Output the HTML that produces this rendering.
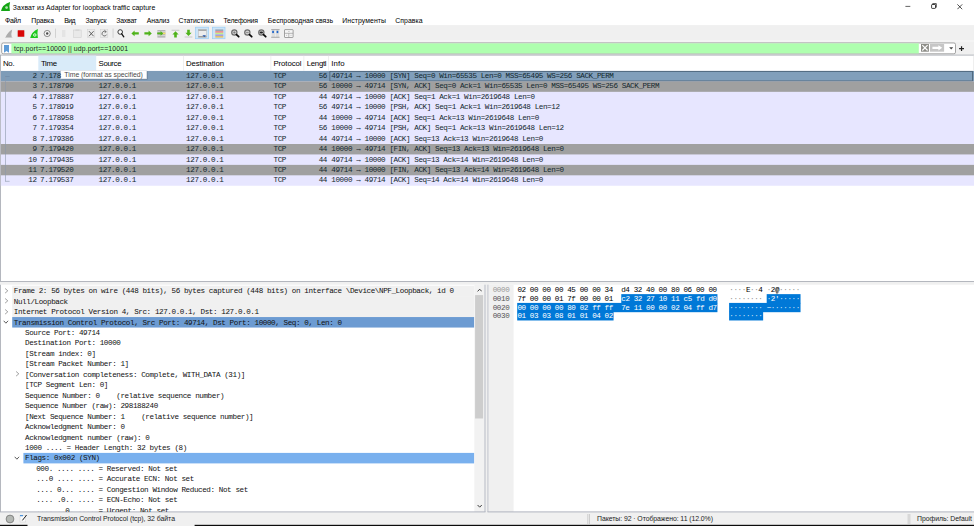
<!DOCTYPE html>
<html><head><meta charset="utf-8"><title>Wireshark</title>
<style>
html,body{margin:0;padding:0;}
body{width:974px;height:526px;overflow:hidden;position:relative;background:#f0f0f0;font-family:"Liberation Sans",sans-serif;}
.b{position:absolute;display:block;}
.t{position:absolute;white-space:pre;color:#000;}
.s{font-family:"Liberation Sans",sans-serif;font-size:6.9px;line-height:10px;}
.h{font-family:"Liberation Sans",sans-serif;font-size:7.8px;line-height:12px;}
.m{font-family:"Liberation Mono",monospace;font-size:7.6px;letter-spacing:-0.407px;line-height:10.45px;color:#12272e;}
.x{font-family:"Liberation Mono",monospace;font-size:7.6px;letter-spacing:-0.405px;line-height:8.75px;color:#000;}
</style></head><body>

<svg class="b" style="left:0;top:0" width="974" height="526" viewBox="0 0 974 526"><rect x="0.00" y="0.00" width="974.00" height="25.30" fill="#ffffff"/><rect x="0.00" y="25.20" width="974.00" height="16.40" fill="#f0f0f0"/><rect x="0.00" y="40.60" width="974.00" height="0.80" fill="#fafafa"/><rect x="16.60" y="29.30" width="8.40" height="8.50" fill="#e4f0f0"/><rect x="17.70" y="30.20" width="6.60" height="6.60" fill="#d80404" rx="0.4"/><rect x="55.10" y="28.60" width="0.70" height="9.20" fill="#c4c4c4"/><rect x="112.70" y="28.60" width="0.70" height="9.20" fill="#c4c4c4"/><rect x="195.50" y="27.20" width="13.00" height="11.50" fill="#cce4f7" stroke="#99cdf5" stroke-width="0.7"/><rect x="212.40" y="27.20" width="12.60" height="11.50" fill="#cce4f7" stroke="#99cdf5" stroke-width="0.7"/><rect x="1.70" y="42.95" width="953.80" height="10.85" fill="#ffffff" rx="1.6" stroke="#8e8e8e" stroke-width="0.8"/><rect x="11.40" y="43.35" width="907.40" height="10.05" fill="#afffaf"/><rect x="0.42" y="55.10" width="980.00" height="226.40" fill="#ffffff" stroke="#a8acb4" stroke-width="0.85"/><rect x="38.30" y="55.60" width="57.90" height="15.00" fill="#d9ebf9"/><rect x="183.30" y="55.60" width="0.60" height="15.00" fill="#e5e5e5"/><rect x="270.60" y="55.60" width="0.60" height="15.00" fill="#e5e5e5"/><rect x="303.60" y="55.60" width="0.60" height="15.00" fill="#e5e5e5"/><rect x="328.20" y="55.60" width="0.60" height="15.00" fill="#e5e5e5"/><rect x="973.00" y="55.60" width="0.60" height="15.00" fill="#e5e5e5"/><rect x="0.85" y="70.95" width="974.00" height="114.79" fill="#e7e6ff"/><rect x="0.85" y="70.95" width="974.00" height="10.44" fill="#7e9cb8"/><rect x="329.90" y="71.30" width="642.60" height="9.70" fill="#819fbb" stroke="#3e5468" stroke-width="0.7"/><rect x="0.85" y="81.39" width="974.00" height="10.44" fill="#a0a0a0"/><rect x="0.85" y="144.00" width="974.00" height="10.44" fill="#a0a0a0"/><rect x="0.85" y="164.87" width="974.00" height="10.44" fill="#a0a0a0"/><rect x="5.20" y="76.20" width="0.60" height="105.20" fill="#8c98aa"/><rect x="5.20" y="76.20" width="4.40" height="0.55" fill="#6a86a2"/><rect x="5.20" y="180.90" width="4.40" height="0.60" fill="#8c98aa"/><rect x="61.40" y="71.40" width="86.20" height="8.20" fill="rgba(0,0,0,.20)"/><rect x="60.70" y="70.70" width="86.10" height="8.20" fill="#ffffff" stroke="#c8ccd2" stroke-width="0.3"/><rect x="0.00" y="284.70" width="485.50" height="227.30" fill="#ffffff"/><rect x="0.00" y="284.70" width="0.85" height="227.30" fill="#a8acb4"/><rect x="12.20" y="285.70" width="462.10" height="10.95" fill="#f0f0f0"/><rect x="12.20" y="296.15" width="462.10" height="10.95" fill="#f0f0f0"/><rect x="12.20" y="306.60" width="462.10" height="10.45" fill="#f0f0f0"/><rect x="12.20" y="317.05" width="462.10" height="10.50" fill="#6c9bd2"/><rect x="23.40" y="452.90" width="450.90" height="10.50" fill="#79b0ee"/><rect x="474.30" y="284.70" width="10.20" height="227.30" fill="#f2f2f2"/><rect x="475.10" y="295.10" width="8.00" height="123.40" fill="#cdcdcd"/><rect x="484.50" y="284.70" width="1.00" height="227.30" fill="#b0b4be"/><rect x="487.50" y="284.70" width="486.50" height="227.30" fill="#ffffff"/><rect x="487.50" y="284.70" width="1.10" height="227.30" fill="#b0b4be"/><rect x="488.60" y="284.70" width="25.00" height="227.30" fill="#f0f0f0"/><rect x="621.27" y="294.13" width="96.17" height="9.28" fill="#0078d7"/><rect x="517.20" y="302.91" width="200.24" height="9.28" fill="#0078d7"/><rect x="517.20" y="311.69" width="96.37" height="8.78" fill="#0078d7"/><rect x="766.70" y="294.13" width="33.84" height="9.28" fill="#0078d7"/><rect x="729.10" y="302.91" width="71.44" height="9.28" fill="#0078d7"/><rect x="729.10" y="311.69" width="34.04" height="8.78" fill="#0078d7"/><rect x="0.00" y="512.00" width="974.00" height="14.00" fill="#f0f0f0"/><rect x="0.00" y="511.40" width="485.50" height="1.00" fill="#b0b4be"/><rect x="487.50" y="511.40" width="486.50" height="1.00" fill="#b0b4be"/><rect x="587.60" y="514.00" width="0.60" height="10.00" fill="#b4b4b4"/><rect x="589.40" y="514.00" width="0.60" height="10.00" fill="#b4b4b4"/><rect x="907.80" y="514.00" width="0.60" height="10.00" fill="#b4b4b4"/><rect x="909.60" y="514.00" width="0.60" height="10.00" fill="#b4b4b4"/><rect x="0.00" y="524.80" width="27.50" height="1.30" fill="#0c0c0c"/><rect x="194.60" y="524.80" width="779.40" height="1.30" fill="#0c0c0c"/></svg>
<svg class="b" style="left:1.00px;top:2.00px" width="10" height="10" viewBox="0 0 10 10"><path d="M0 9 Q1.2 2.6 9.1 0 Q7.7 4.4 8.9 9 Z" fill="#14a514"/><circle cx="5.6" cy="5.6" r="1.4" fill="#b4e0b4"/></svg>
<span id="t1" class="t s" style="top:2.50px;left:12.80px;letter-spacing:0.059px;">Захват из Adapter for loopback traffic capture</span>
<svg class="b" style="left:905.00px;top:4.00px" width="6" height="6" viewBox="0 0 6 6"><path d="M0.4 2.4H5.3" stroke="#222" stroke-width="0.7"/></svg>
<svg class="b" style="left:931.00px;top:3.40px" width="6" height="6" viewBox="0 0 6 6"><rect x="0.6" y="1.5" width="3.9" height="3.9" fill="none" stroke="#111" stroke-width="0.8" rx="0.6"/><path d="M1.7 1.4V0.6H5.3V4.3H4.6" fill="none" stroke="#111" stroke-width="0.7"/></svg>
<svg class="b" style="left:956.90px;top:3.80px" width="6" height="6" viewBox="0 0 6 6"><path d="M0.4 0.4L5.2 5.2M5.2 0.4L0.4 5.2" stroke="#222" stroke-width="0.8"/></svg>
<span id="t2" class="t s" style="top:15.80px;left:5.00px;letter-spacing:-0.318px;">Файл</span>
<span id="t3" class="t s" style="top:15.80px;left:31.30px;letter-spacing:-0.116px;">Правка</span>
<span id="t4" class="t s" style="top:15.80px;left:64.30px;letter-spacing:-0.634px;">Вид</span>
<span id="t5" class="t s" style="top:15.80px;left:85.50px;letter-spacing:-0.113px;">Запуск</span>
<span id="t6" class="t s" style="top:15.80px;left:116.30px;letter-spacing:-0.232px;">Захват</span>
<span id="t7" class="t s" style="top:15.80px;left:146.80px;letter-spacing:-0.113px;">Анализ</span>
<span id="t8" class="t s" style="top:15.80px;left:178.50px;letter-spacing:-0.078px;">Статистика</span>
<span id="t9" class="t s" style="top:15.80px;left:223.40px;letter-spacing:-0.196px;">Телефония</span>
<span id="t10" class="t s" style="top:15.80px;left:267.80px;letter-spacing:-0.005px;">Беспроводная связь</span>
<span id="t11" class="t s" style="top:15.80px;left:342.30px;letter-spacing:0.073px;">Инструменты</span>
<span id="t12" class="t s" style="top:15.80px;left:395.30px;letter-spacing:0.028px;">Справка</span>
<svg class="b" style="left:4.60px;top:29.00px" width="9" height="9" viewBox="0 0 9 9"><path d="M0.4 8.5 Q2.4 3.4 7.2 0.5 Q5.8 4.6 6.8 8.5 Z" fill="#acacac"/><path d="M0 8.5H7.6" stroke="#c8c8c8" stroke-width="0.5"/></svg>
<svg class="b" style="left:29.80px;top:29.00px" width="9" height="9" viewBox="0 0 9 9"><path d="M0.2 8.9 Q1.6 2.8 7.9 0 Q6.9 4.4 7.9 8.9 Z" fill="#1cc81c"/><circle cx="4.8" cy="6" r="1.25" fill="none" stroke="#f0fff0" stroke-width="0.9"/></svg>
<svg class="b" style="left:43.40px;top:29.00px" width="9" height="9" viewBox="0 0 9 9"><circle cx="4.2" cy="4.5" r="3.1" fill="#f4f4f4" stroke="#4a4a4a" stroke-width="0.6"/><circle cx="4.2" cy="4.5" r="1.2" fill="#4a4a4a"/></svg>
<svg class="b" style="left:61.40px;top:29.00px" width="9" height="9" viewBox="0 0 9 9"><rect x="1" y="1" width="3.4" height="7" fill="#e4e4e4"/></svg>
<svg class="b" style="left:73.00px;top:29.00px" width="9" height="9" viewBox="0 0 9 9"><rect x="0.6" y="1" width="7.6" height="7.4" fill="#e9e9e9" stroke="#cfcfcf" stroke-width="0.6"/><rect x="2.4" y="0.4" width="4" height="1.6" fill="#d6d6d6"/></svg>
<svg class="b" style="left:87.00px;top:29.00px" width="9" height="9" viewBox="0 0 9 9"><rect x="0.6" y="0.6" width="7.2" height="8" fill="#ececec" stroke="#cfcfcf" stroke-width="0.5"/><path d="M2 2.2L6.6 7.2M6.6 2.2L2 7.2" stroke="#555" stroke-width="0.9"/></svg>
<svg class="b" style="left:100.40px;top:29.00px" width="9" height="9" viewBox="0 0 9 9"><rect x="0.6" y="0.6" width="7.2" height="8" fill="#ececec" stroke="#cfcfcf" stroke-width="0.5"/><path d="M6 2.8A2.4 2.4 0 1 0 6.6 5.6" fill="none" stroke="#666" stroke-width="0.9"/><path d="M4.4 1.2L6.4 2.7L4.6 3.8" fill="none" stroke="#666" stroke-width="0.7"/></svg>
<svg class="b" style="left:117.40px;top:29.00px" width="9" height="9" viewBox="0 0 9 9"><circle cx="3.2" cy="3" r="2.3" fill="#fbfbfb" stroke="#222" stroke-width="0.9"/><path d="M4.7 4.8L6.8 7.8" stroke="#111" stroke-width="1.3" stroke-linecap="round"/></svg>
<svg class="b" style="left:131.40px;top:29.00px" width="9" height="9" viewBox="0 0 9 9"><path d="M0.4 4.4L3.6 1.6V3.2H7.8V5.6H3.6V7.2Z" fill="#4fb31a"/></svg>
<svg class="b" style="left:144.20px;top:29.00px" width="9" height="9" viewBox="0 0 9 9"><path d="M7.8 4.4L4.6 1.6V3.2H0.4V5.6H4.6V7.2Z" fill="#4fb31a"/></svg>
<svg class="b" style="left:157.20px;top:29.00px" width="9" height="9" viewBox="0 0 9 9"><rect x="0.4" y="1" width="8" height="7.6" fill="#b4b4b4"/><rect x="0.4" y="2.4" width="8" height="0.7" fill="#e8e8e8"/><rect x="0.4" y="6.4" width="8" height="0.7" fill="#e8e8e8"/><rect x="5.6" y="3.6" width="2.8" height="1.6" fill="#f4e36a"/><path d="M6.2 4.4L3.6 2V3.5H0.2V5.3H3.6V6.8Z" fill="#4fb31a"/></svg>
<svg class="b" style="left:170.60px;top:29.00px" width="9" height="9" viewBox="0 0 9 9"><rect x="0.6" y="0.8" width="7.8" height="0.8" fill="#bdbdbd"/><path d="M4.5 2.2L1.4 5.4H3.2V8.4H5.8V5.4H7.6Z" fill="#4fb31a"/></svg>
<svg class="b" style="left:183.80px;top:29.00px" width="9" height="9" viewBox="0 0 9 9"><rect x="0.6" y="7.6" width="7.8" height="0.8" fill="#bdbdbd"/><path d="M4.5 7L1.4 3.8H3.2V0.8H5.8V3.8H7.6Z" fill="#4fb31a"/></svg>
<svg class="b" style="left:197.80px;top:29.00px" width="9" height="9" viewBox="0 0 9 9"><rect x="0.4" y="0.6" width="8" height="7.8" fill="#ededed" stroke="#b5b5b5" stroke-width="0.5"/><rect x="0.4" y="0.6" width="8" height="1.2" fill="#9a9a9a"/><rect x="0.4" y="7.2" width="8" height="1" fill="#8a8a8a"/><path d="M4.4 6.2H8L6.2 8Z" fill="#1a4fae"/></svg>
<svg class="b" style="left:214.60px;top:29.00px" width="9" height="9" viewBox="0 0 9 9"><rect x="0.3" y="0.4" width="8" height="1.7" fill="#9aa7b4"/><rect x="0.3" y="2.1" width="8" height="1.7" fill="#f08a8a"/><rect x="0.3" y="3.8" width="8" height="1.6" fill="#c4ee86"/><rect x="0.3" y="5.4" width="8" height="1.6" fill="#a6a0dc"/><rect x="0.3" y="7" width="8" height="1.6" fill="#e2c06a"/></svg>
<svg class="b" style="left:231.20px;top:29.00px" width="9" height="9" viewBox="0 0 9 9"><circle cx="3.35" cy="3.5" r="3.6" fill="#f8f8f8"/><circle cx="3.35" cy="3.5" r="2.65" fill="#cdcdcd" stroke="#6c6c6c" stroke-width="1.15"/><path d="M2.2 3.5H4.5M3.35 2.35V4.65" stroke="#666" stroke-width="0.6"/><path d="M5.5 5.7L7.7 7.7" stroke="#0a0a0a" stroke-width="1.8" stroke-linecap="round"/></svg>
<svg class="b" style="left:244.25px;top:29.00px" width="9" height="9" viewBox="0 0 9 9"><circle cx="3.35" cy="3.5" r="3.6" fill="#f8f8f8"/><circle cx="3.35" cy="3.5" r="2.65" fill="#cdcdcd" stroke="#6c6c6c" stroke-width="1.15"/><path d="M2.1 3.5H4.6" stroke="#777" stroke-width="0.7"/><path d="M5.5 5.7L7.7 7.7" stroke="#0a0a0a" stroke-width="1.8" stroke-linecap="round"/></svg>
<svg class="b" style="left:258.05px;top:29.00px" width="9" height="9" viewBox="0 0 9 9"><circle cx="3.35" cy="3.5" r="3.6" fill="#f8f8f8"/><circle cx="3.35" cy="3.5" r="2.65" fill="#cdcdcd" stroke="#6c6c6c" stroke-width="1.15"/><ellipse cx="3.35" cy="3.5" rx="1.7" ry="0.9" fill="#222"/><path d="M5.5 5.7L7.7 7.7" stroke="#0a0a0a" stroke-width="1.8" stroke-linecap="round"/></svg>
<svg class="b" style="left:271.40px;top:29.00px" width="9" height="9" viewBox="0 0 9 9"><rect x="0.6" y="0.8" width="7.6" height="7.4" fill="#dedede"/><path d="M4.4 0.8V8.2" stroke="#f4f4f4" stroke-width="0.7"/><path d="M0.2 0.6H8.6M0.2 8.3H8.6" stroke="#8a8a8a" stroke-width="0.7"/><rect x="1.2" y="1.8" width="1.7" height="2.3" fill="#1e64c8"/><rect x="5.6" y="1.8" width="1.7" height="2.3" fill="#1e64c8"/></svg>
<svg class="b" style="left:284.20px;top:29.00px" width="10" height="9" viewBox="0 0 10 9"><rect x="0.5" y="0.6" width="8.6" height="7.9" fill="#f6f6f6" stroke="#8c8c8c" stroke-width="0.8" rx="0.5"/><path d="M0.5 4.3H9.1M4.8 4.3V8.5" stroke="#9a9a9a" stroke-width="0.7"/><path d="M4.2 2.5H5.6M2.6 5.8V7M7 5.8V7" stroke="#aaa" stroke-width="0.6"/></svg>
<svg class="b" style="left:4.00px;top:44.50px" width="5" height="8" viewBox="0 0 5 8"><path d="M0 0H5V7.8L2.5 6L0 7.8Z" fill="#5e9bd6"/></svg>
<span id="t13" class="t s" style="top:43.50px;left:14.00px;color:#1a1a1a;letter-spacing:0.118px;">tcp.port==10000 || udp.port==10001</span>
<svg class="b" style="left:920.80px;top:44.30px" width="8" height="8" viewBox="0 0 8 8"><rect x="0" y="0" width="7.9" height="7.7" fill="#8c8c86"/><path d="M1.3 1.2L6.6 6.5M6.6 1.2L1.3 6.5" stroke="#fff" stroke-width="1.2"/></svg>
<svg class="b" style="left:930.20px;top:44.30px" width="15" height="8" viewBox="0 0 15 8"><rect x="0" y="0" width="14.1" height="7.7" fill="#c6c6c6"/><path d="M2.4 2.8H8.4V1.3L12.2 3.85L8.4 6.4V4.9H2.4Z" fill="#fff"/></svg>
<svg class="b" style="left:948.60px;top:46.80px" width="5" height="3" viewBox="0 0 5 3"><path d="M0.2 0.3H4.2L2.2 2.5Z" fill="#444"/></svg>
<svg class="b" style="left:959.00px;top:45.70px" width="6" height="6" viewBox="0 0 6 6"><path d="M2.55 0.2V4.9M0.1 2.55H5" stroke="#222" stroke-width="1.2"/></svg>
<span id="t14" class="t h" style="top:58.00px;left:2.90px;letter-spacing:-0.170px;">No.</span>
<span id="t15" class="t h" style="top:58.00px;left:41.00px;letter-spacing:-0.349px;">Time</span>
<span id="t16" class="t h" style="top:58.00px;left:98.60px;letter-spacing:-0.364px;">Source</span>
<span id="t17" class="t h" style="top:58.00px;left:186.10px;letter-spacing:-0.112px;">Destination</span>
<span id="t18" class="t h" style="top:58.00px;left:273.50px;letter-spacing:-0.087px;">Protocol</span>
<span id="t19" class="t h" style="top:58.00px;left:306.70px;letter-spacing:-0.270px;">Lengtl</span>
<span id="t20" class="t h" style="top:58.00px;left:331.30px;letter-spacing:0.061px;">Info</span>
<span id="t21" class="t m" style="top:70.95px;right:937.40px;">2</span>
<span id="t22" class="t m" style="top:70.95px;left:40.10px;">7.178</span>
<span id="t23" class="t m" style="top:70.95px;left:186.10px;">127.0.0.1</span>
<span id="t24" class="t m" style="top:70.95px;left:273.50px;">TCP</span>
<span id="t25" class="t m" style="top:70.95px;right:647.00px;">56</span>
<span id="t26" class="t m" style="top:70.95px;left:331.30px;">49714 → 10000 [SYN] Seq=0 Win=65535 Len=0 MSS=65495 WS=256 SACK_PERM</span>
<span id="t27" class="t m" style="top:81.40px;right:937.40px;">3</span>
<span id="t28" class="t m" style="top:81.40px;left:40.10px;">7.178790</span>
<span id="t29" class="t m" style="top:81.40px;left:98.60px;">127.0.0.1</span>
<span id="t30" class="t m" style="top:81.40px;left:186.10px;">127.0.0.1</span>
<span id="t31" class="t m" style="top:81.40px;left:273.50px;">TCP</span>
<span id="t32" class="t m" style="top:81.40px;right:647.00px;">56</span>
<span id="t33" class="t m" style="top:81.40px;left:331.30px;">10000 → 49714 [SYN, ACK] Seq=0 Ack=1 Win=65535 Len=0 MSS=65495 WS=256 SACK_PERM</span>
<span id="t34" class="t m" style="top:91.85px;right:937.40px;">4</span>
<span id="t35" class="t m" style="top:91.85px;left:40.10px;">7.178887</span>
<span id="t36" class="t m" style="top:91.85px;left:98.60px;">127.0.0.1</span>
<span id="t37" class="t m" style="top:91.85px;left:186.10px;">127.0.0.1</span>
<span id="t38" class="t m" style="top:91.85px;left:273.50px;">TCP</span>
<span id="t39" class="t m" style="top:91.85px;right:647.00px;">44</span>
<span id="t40" class="t m" style="top:91.85px;left:331.30px;">49714 → 10000 [ACK] Seq=1 Ack=1 Win=2619648 Len=0</span>
<span id="t41" class="t m" style="top:102.30px;right:937.40px;">5</span>
<span id="t42" class="t m" style="top:102.30px;left:40.10px;">7.178919</span>
<span id="t43" class="t m" style="top:102.30px;left:98.60px;">127.0.0.1</span>
<span id="t44" class="t m" style="top:102.30px;left:186.10px;">127.0.0.1</span>
<span id="t45" class="t m" style="top:102.30px;left:273.50px;">TCP</span>
<span id="t46" class="t m" style="top:102.30px;right:647.00px;">56</span>
<span id="t47" class="t m" style="top:102.30px;left:331.30px;">49714 → 10000 [PSH, ACK] Seq=1 Ack=1 Win=2619648 Len=12</span>
<span id="t48" class="t m" style="top:112.75px;right:937.40px;">6</span>
<span id="t49" class="t m" style="top:112.75px;left:40.10px;">7.178958</span>
<span id="t50" class="t m" style="top:112.75px;left:98.60px;">127.0.0.1</span>
<span id="t51" class="t m" style="top:112.75px;left:186.10px;">127.0.0.1</span>
<span id="t52" class="t m" style="top:112.75px;left:273.50px;">TCP</span>
<span id="t53" class="t m" style="top:112.75px;right:647.00px;">44</span>
<span id="t54" class="t m" style="top:112.75px;left:331.30px;">10000 → 49714 [ACK] Seq=1 Ack=13 Win=2619648 Len=0</span>
<span id="t55" class="t m" style="top:123.20px;right:937.40px;">7</span>
<span id="t56" class="t m" style="top:123.20px;left:40.10px;">7.179354</span>
<span id="t57" class="t m" style="top:123.20px;left:98.60px;">127.0.0.1</span>
<span id="t58" class="t m" style="top:123.20px;left:186.10px;">127.0.0.1</span>
<span id="t59" class="t m" style="top:123.20px;left:273.50px;">TCP</span>
<span id="t60" class="t m" style="top:123.20px;right:647.00px;">56</span>
<span id="t61" class="t m" style="top:123.20px;left:331.30px;">10000 → 49714 [PSH, ACK] Seq=1 Ack=13 Win=2619648 Len=12</span>
<span id="t62" class="t m" style="top:133.65px;right:937.40px;">8</span>
<span id="t63" class="t m" style="top:133.65px;left:40.10px;">7.179386</span>
<span id="t64" class="t m" style="top:133.65px;left:98.60px;">127.0.0.1</span>
<span id="t65" class="t m" style="top:133.65px;left:186.10px;">127.0.0.1</span>
<span id="t66" class="t m" style="top:133.65px;left:273.50px;">TCP</span>
<span id="t67" class="t m" style="top:133.65px;right:647.00px;">44</span>
<span id="t68" class="t m" style="top:133.65px;left:331.30px;">49714 → 10000 [ACK] Seq=13 Ack=13 Win=2619648 Len=0</span>
<span id="t69" class="t m" style="top:144.10px;right:937.40px;">9</span>
<span id="t70" class="t m" style="top:144.10px;left:40.10px;">7.179420</span>
<span id="t71" class="t m" style="top:144.10px;left:98.60px;">127.0.0.1</span>
<span id="t72" class="t m" style="top:144.10px;left:186.10px;">127.0.0.1</span>
<span id="t73" class="t m" style="top:144.10px;left:273.50px;">TCP</span>
<span id="t74" class="t m" style="top:144.10px;right:647.00px;">44</span>
<span id="t75" class="t m" style="top:144.10px;left:331.30px;">10000 → 49714 [FIN, ACK] Seq=13 Ack=13 Win=2619648 Len=0</span>
<span id="t76" class="t m" style="top:154.55px;right:937.40px;">10</span>
<span id="t77" class="t m" style="top:154.55px;left:40.10px;">7.179435</span>
<span id="t78" class="t m" style="top:154.55px;left:98.60px;">127.0.0.1</span>
<span id="t79" class="t m" style="top:154.55px;left:186.10px;">127.0.0.1</span>
<span id="t80" class="t m" style="top:154.55px;left:273.50px;">TCP</span>
<span id="t81" class="t m" style="top:154.55px;right:647.00px;">44</span>
<span id="t82" class="t m" style="top:154.55px;left:331.30px;">49714 → 10000 [ACK] Seq=13 Ack=14 Win=2619648 Len=0</span>
<span id="t83" class="t m" style="top:165.00px;right:937.40px;">11</span>
<span id="t84" class="t m" style="top:165.00px;left:40.10px;">7.179520</span>
<span id="t85" class="t m" style="top:165.00px;left:98.60px;">127.0.0.1</span>
<span id="t86" class="t m" style="top:165.00px;left:186.10px;">127.0.0.1</span>
<span id="t87" class="t m" style="top:165.00px;left:273.50px;">TCP</span>
<span id="t88" class="t m" style="top:165.00px;right:647.00px;">44</span>
<span id="t89" class="t m" style="top:165.00px;left:331.30px;">49714 → 10000 [FIN, ACK] Seq=13 Ack=14 Win=2619648 Len=0</span>
<span id="t90" class="t m" style="top:175.45px;right:937.40px;">12</span>
<span id="t91" class="t m" style="top:175.45px;left:40.10px;">7.179537</span>
<span id="t92" class="t m" style="top:175.45px;left:98.60px;">127.0.0.1</span>
<span id="t93" class="t m" style="top:175.45px;left:186.10px;">127.0.0.1</span>
<span id="t94" class="t m" style="top:175.45px;left:273.50px;">TCP</span>
<span id="t95" class="t m" style="top:175.45px;right:647.00px;">44</span>
<span id="t96" class="t m" style="top:175.45px;left:331.30px;">10000 → 49714 [ACK] Seq=14 Ack=14 Win=2619648 Len=0</span>
<span id="t97" class="t s" style="top:69.80px;left:64.30px;color:#4a4a4a;letter-spacing:-0.036px;">Time (format as specified)</span>
<div class="b" style="left:0;top:284.70px;width:484.6px;height:227.30px;overflow:hidden;">
<span id="t98" class="t m" style="top:1.55px;left:13.80px;color:#111;">Frame 2: 56 bytes on wire (448 bits), 56 bytes captured (448 bits) on interface \Device\NPF_Loopback, id 0</span>
<svg class="b" style="left:3.60px;top:3.20px" width="5" height="6" viewBox="0 0 5 6"><path d="M1.1 0.5L3.8 2.8L1.1 5.1" fill="none" stroke="#8e8e8e" stroke-width="0.85"/></svg>
<span id="t99" class="t m" style="top:12.00px;left:13.80px;color:#111;">Null/Loopback</span>
<svg class="b" style="left:3.60px;top:13.65px" width="5" height="6" viewBox="0 0 5 6"><path d="M1.1 0.5L3.8 2.8L1.1 5.1" fill="none" stroke="#8e8e8e" stroke-width="0.85"/></svg>
<span id="t100" class="t m" style="top:22.45px;left:13.80px;color:#111;">Internet Protocol Version 4, Src: 127.0.0.1, Dst: 127.0.0.1</span>
<svg class="b" style="left:3.60px;top:24.10px" width="5" height="6" viewBox="0 0 5 6"><path d="M1.1 0.5L3.8 2.8L1.1 5.1" fill="none" stroke="#8e8e8e" stroke-width="0.85"/></svg>
<span id="t101" class="t m" style="top:32.90px;left:13.80px;color:#111;">Transmission Control Protocol, Src Port: 49714, Dst Port: 10000, Seq: 0, Len: 0</span>
<svg class="b" style="left:3.00px;top:35.35px" width="6" height="5" viewBox="0 0 6 5"><path d="M0.7 0.8L2.9 3.2L5.1 0.8" fill="none" stroke="#333" stroke-width="0.8"/></svg>
<span id="t102" class="t m" style="top:43.35px;left:25.00px;color:#111;">Source Port: 49714</span>
<span id="t103" class="t m" style="top:53.80px;left:25.00px;color:#111;">Destination Port: 10000</span>
<span id="t104" class="t m" style="top:64.25px;left:25.00px;color:#111;">[Stream index: 0]</span>
<span id="t105" class="t m" style="top:74.70px;left:25.00px;color:#111;">[Stream Packet Number: 1]</span>
<span id="t106" class="t m" style="top:85.15px;left:25.00px;color:#111;">[Conversation completeness: Complete, WITH_DATA (31)]</span>
<svg class="b" style="left:14.80px;top:86.80px" width="5" height="6" viewBox="0 0 5 6"><path d="M1.1 0.5L3.8 2.8L1.1 5.1" fill="none" stroke="#8e8e8e" stroke-width="0.85"/></svg>
<span id="t107" class="t m" style="top:95.60px;left:25.00px;color:#111;">[TCP Segment Len: 0]</span>
<span id="t108" class="t m" style="top:106.05px;left:25.00px;color:#111;">Sequence Number: 0    (relative sequence number)</span>
<span id="t109" class="t m" style="top:116.50px;left:25.00px;color:#111;">Sequence Number (raw): 298188240</span>
<span id="t110" class="t m" style="top:126.95px;left:25.00px;color:#111;">[Next Sequence Number: 1    (relative sequence number)]</span>
<span id="t111" class="t m" style="top:137.40px;left:25.00px;color:#111;">Acknowledgment Number: 0</span>
<span id="t112" class="t m" style="top:147.85px;left:25.00px;color:#111;">Acknowledgment number (raw): 0</span>
<span id="t113" class="t m" style="top:158.30px;left:25.00px;color:#111;">1000 .... = Header Length: 32 bytes (8)</span>
<span id="t114" class="t m" style="top:168.75px;left:25.00px;color:#111;">Flags: 0x002 (SYN)</span>
<svg class="b" style="left:14.20px;top:171.20px" width="6" height="5" viewBox="0 0 6 5"><path d="M0.7 0.8L2.9 3.2L5.1 0.8" fill="none" stroke="#333" stroke-width="0.8"/></svg>
<span id="t115" class="t m" style="top:179.20px;left:36.20px;color:#111;">000. .... .... = Reserved: Not set</span>
<span id="t116" class="t m" style="top:189.65px;left:36.20px;color:#111;">...0 .... .... = Accurate ECN: Not set</span>
<span id="t117" class="t m" style="top:200.10px;left:36.20px;color:#111;">.... 0... .... = Congestion Window Reduced: Not set</span>
<span id="t118" class="t m" style="top:210.55px;left:36.20px;color:#111;">.... .0.. .... = ECN-Echo: Not set</span>
<span id="t119" class="t m" style="top:221.45px;left:36.20px;color:#111;">.... ..0. .... = Urgent: Not set</span>
</div>
<svg class="b" style="left:476.60px;top:288.20px" width="5.4" height="4.4" viewBox="0 0 5.4 4.4"><path d="M0.6 3.4L2.7 1.2L4.8 3.4" fill="none" stroke="#404040" stroke-width="1"/></svg>
<svg class="b" style="left:476.60px;top:503.80px" width="5.4" height="4.4" viewBox="0 0 5.4 4.4"><path d="M0.6 1L2.7 3.2L4.8 1" fill="none" stroke="#404040" stroke-width="1"/></svg>
<span id="t120" class="t x" style="top:286.35px;left:492.70px;color:#9a9a9a;">0000</span>
<span id="t121" class="t x" style="top:286.35px;left:517.40px;">02 00 00 00 45 00 00 34  d4 32 40 00 80 06 00 00</span>
<span id="t122" class="t x" style="top:286.35px;left:729.30px;color:#8c8c8c;">···· ··  ·  ·····</span>
<span id="t123" class="t x" style="top:286.35px;left:729.30px;color:#000;">    E  4  2@     </span>
<span id="t124" class="t x" style="top:295.03px;left:492.70px;color:#555;">0010</span>
<span id="t125" class="t x" style="top:295.03px;left:517.40px;">7f 00 00 01 7f 00 00 01  </span>
<span id="t126" class="t x" style="top:295.03px;left:621.27px;color:#fff;">c2 32 27 10 11 c5 fd d0</span>
<span id="t127" class="t x" style="top:295.03px;left:729.30px;color:#8c8c8c;">········ </span>
<span id="t128" class="t x" style="top:295.03px;left:766.70px;color:#d8e8f8;">·  ·····</span>
<span id="t129" class="t x" style="top:295.03px;left:766.70px;color:#fff;"> 2'     </span>
<span id="t130" class="t x" style="top:303.71px;left:492.70px;color:#555;">0020</span>
<span id="t131" class="t x" style="top:303.71px;left:517.40px;color:#fff;">00 00 00 00 80 02 ff ff  7e 11 00 00 02 04 ff d7</span>
<span id="t132" class="t x" style="top:303.71px;left:729.30px;color:#d8e8f8;">········  ·······</span>
<span id="t133" class="t x" style="top:303.71px;left:729.30px;color:#fff;">         ~       </span>
<span id="t134" class="t x" style="top:312.39px;left:492.70px;color:#555;">0030</span>
<span id="t135" class="t x" style="top:312.39px;left:517.40px;color:#fff;">01 03 03 08 01 01 04 02</span>
<span id="t136" class="t x" style="top:312.39px;left:729.30px;color:#d8e8f8;">········</span>
<svg class="b" style="left:774.70px;top:286.80px" width="4" height="8" viewBox="0 0 4 8"><path d="M2 0.6V6.6M0.9 0.4H1.7M2.3 0.4H3.1M0.9 6.8H1.7M2.3 6.8H3.1" stroke="#333" stroke-width="0.55" fill="none"/></svg>
<svg class="b" style="left:4.50px;top:513.80px" width="10" height="10" viewBox="0 0 10 10"><circle cx="5" cy="5" r="3.9" fill="#b4b8b4" stroke="#6a6a6a" stroke-width="0.7"/></svg>
<svg class="b" style="left:18.80px;top:514.40px" width="9" height="9" viewBox="0 0 9 9"><rect x="1" y="1.6" width="5.8" height="6.4" fill="#fbfbfb" stroke="#c8c8c8" stroke-width="0.4"/><rect x="1" y="1.2" width="3" height="1" fill="#2a7fd8"/><path d="M7.6 1L3.4 6.4" stroke="#222" stroke-width="1"/></svg>
<span id="t137" class="t s" style="top:514.30px;left:37.00px;color:#222;letter-spacing:-0.035px;">Transmission Control Protocol (tcp), 32 байта</span>
<span id="t138" class="t s" style="top:514.30px;left:597.00px;color:#222;letter-spacing:-0.065px;">Пакеты: 92 · Отображено: 11 (12.0%)</span>
<span id="t139" class="t s" style="top:514.30px;left:917.00px;color:#222;letter-spacing:-0.028px;">Профиль: Default</span>
</body></html>
